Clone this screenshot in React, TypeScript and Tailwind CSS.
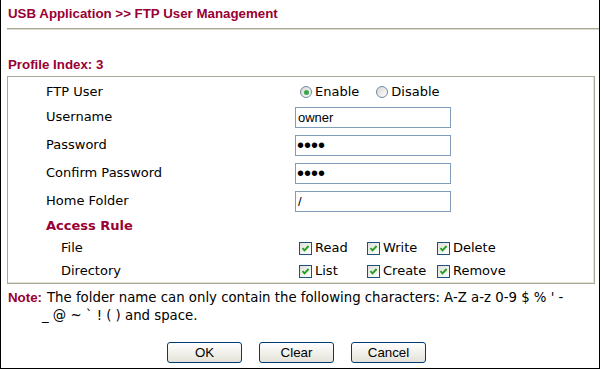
import React from "react";

const arial = { fontFamily: '"Liberation Sans", Arial, sans-serif' };

const Radio = ({ checked }: { checked?: boolean }) => (
  <span className="relative inline-flex h-[12px] w-[12px] items-center justify-center rounded-full border border-[#6f8aa6] bg-gradient-to-br from-[#d8d8d0] to-white">
    {checked && <span className="h-[5px] w-[5px] rounded-full bg-[#3aa64a]" />}
  </span>
);

const Check = () => (
  <span className="inline-flex h-[13px] w-[13px] items-center justify-center border border-[#1c5180] bg-gradient-to-br from-[#e0e0d8] to-white">
    <svg width="9" height="9" viewBox="0 0 9 9">
      <path d="M1.5 4.2 L3.5 6.3 L7.6 2" fill="none" stroke="#21a121" strokeWidth="1.9" />
    </svg>
  </span>
);

const Row = ({ label, h, children, indent }: { label: React.ReactNode; h: string; children?: React.ReactNode; indent?: boolean }) => (
  <div className={`flex items-center ${h}`}>
    <div className={`w-[249px] shrink-0 ${indent ? "pl-[15px]" : ""}`}>{label}</div>
    <div className="flex items-center">{children}</div>
  </div>
);

const TextBox = ({ value }: { value: string }) => (
  <input
    type="text"
    readOnly
    defaultValue={value}
    style={arial}
    className="h-[21px] w-[156px] border border-[#7f9db9] bg-white px-[2px] text-[13px] text-black outline-none"
  />
);

const PassBox = ({ value }: { value: string }) => (
  <input
    type="password"
    readOnly
    defaultValue={value}
    style={arial}
    className="h-[21px] w-[156px] border border-[#7f9db9] bg-white px-[1px] text-[20px] leading-none text-black outline-none"
  />
);

const CheckItem = ({ label, w }: { label: string; w: string }) => (
  <div className={`flex items-center gap-[3px] ${w}`}>
    <Check />
    <span>{label}</span>
  </div>
);

const Btn = ({ children }: { children: string }) => (
  <button
    style={arial}
    className="h-[21px] w-[75px] rounded-[3px] border border-[#003c74] bg-gradient-to-b from-white to-[#e4e2d8] text-[13.3px] text-black"
  >
    {children}
  </button>
);

export default function App() {
  return (
    <div className="h-[370px] w-[601px] bg-white">
      <div className="flex h-[369px] w-[600px] flex-col border-b border-l border-r border-black text-black" style={{ fontFamily: '"DejaVu Sans", Verdana, sans-serif' }}>
        <div className="flex h-[28px] items-center pl-[7px] text-[13.3px] font-bold text-[#990033]" style={arial}>
          USB Application &gt;&gt; FTP User Management
        </div>
        <div className="ml-[6px] h-[2px] border-t border-[#aca899] border-b-[#dcdad0] border-b" />
        <div className="mt-[25px] flex h-[20px] items-center pl-[7px] text-[13.3px] font-bold text-[#990033]" style={arial}>
          Profile Index: 3
        </div>
        <div className="mt-[1px] ml-[6px] h-[208px] w-[588px] border border-[#aca899] pt-[4px] pl-[38px] text-[13px] shadow-[inset_-1px_-1px_0_#e4e2da]">
          <Row label="FTP User" h="h-[22px]">
            <div className="flex items-center gap-[3px] pl-[5px]">
              <Radio checked />
              <span>Enable</span>
            </div>
            <div className="ml-[17px] flex items-center gap-[3px]">
              <Radio />
              <span>Disable</span>
            </div>
          </Row>
          <Row label="Username" h="h-[28px]">
            <TextBox value="owner" />
          </Row>
          <Row label="Password" h="h-[28px]">
            <PassBox value="abcd" />
          </Row>
          <Row label="Confirm Password" h="h-[28px]">
            <PassBox value="abcd" />
          </Row>
          <Row label="Home Folder" h="h-[28px]">
            <TextBox value="/" />
          </Row>
          <Row label={<span className="font-bold text-[#990033]">Access Rule</span>} h="h-[21px]" />
          <Row label="File" h="h-[24px]" indent>
            <div className="flex items-center pl-[4px]">
              <CheckItem label="Read" w="w-[68px]" />
              <CheckItem label="Write" w="w-[70px]" />
              <CheckItem label="Delete" w="w-auto" />
            </div>
          </Row>
          <Row label="Directory" h="h-[22px]" indent>
            <div className="flex items-center pl-[4px]">
              <CheckItem label="List" w="w-[68px]" />
              <CheckItem label="Create" w="w-[70px]" />
              <CheckItem label="Remove" w="w-auto" />
            </div>
          </Row>
        </div>
        <div className="mt-[5px] flex pl-[7px] text-[13.3px] leading-[18px]">
          <span className="font-bold text-[#990033]" style={arial}>Note:</span>
          <div className="whitespace-nowrap">
            <div className="pl-[5px]">The folder name can only contain the following characters: A-Z a-z 0-9 $ % ' -</div>
            <div>_ @ ~ ` ! ( ) and space.</div>
          </div>
        </div>
        <div className="mt-[17px] flex gap-[17px] pl-[166px]">
          <Btn>OK</Btn>
          <Btn>Clear</Btn>
          <Btn>Cancel</Btn>
        </div>
      </div>
    </div>
  );
}
